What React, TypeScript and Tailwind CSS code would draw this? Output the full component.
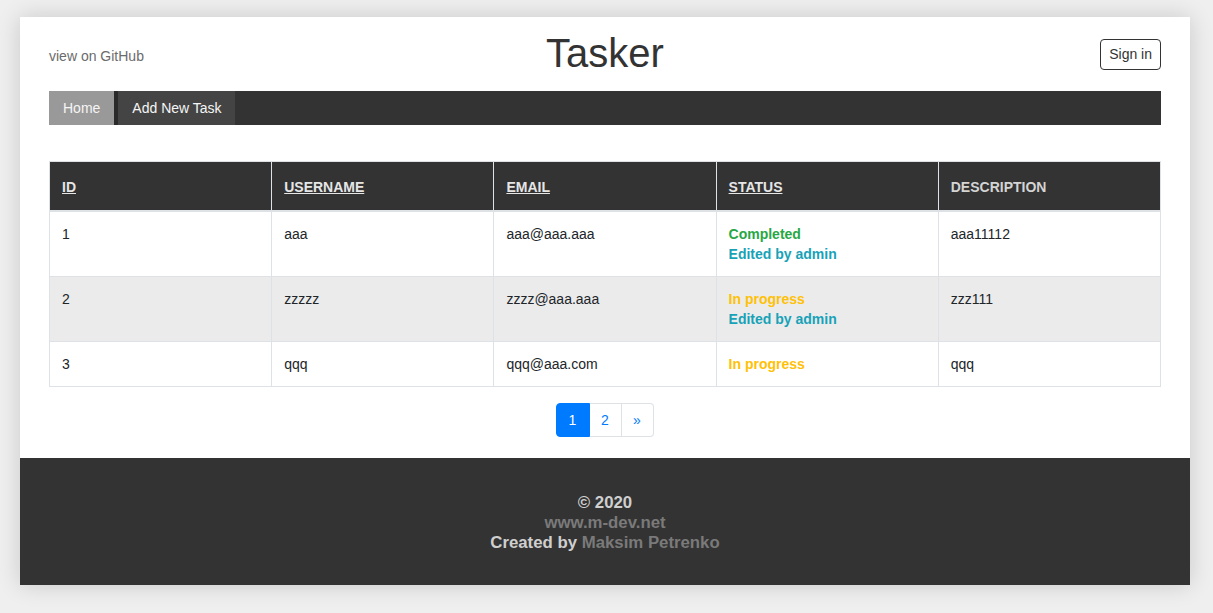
import React from "react";

const rows = [
  { id: "1", user: "aaa", email: "aaa@aaa.aaa", status: "Completed", edited: true, desc: "aaa11112" },
  { id: "2", user: "zzzzz", email: "zzzz@aaa.aaa", status: "In progress", edited: true, desc: "zzz111" },
  { id: "3", user: "qqq", email: "qqq@aaa.com", status: "In progress", edited: false, desc: "qqq" },
];

export default function App() {
  return (
    <div
      className="min-h-[613px] bg-[#efefef] pt-[17px] text-[14px] leading-[20px] text-[#212529]"
      style={{ fontFamily: '"Liberation Sans", Arial, sans-serif' }}
    >
      <div className="mx-[20px] w-[1170px] bg-white shadow-[0_0_22px_rgba(0,0,0,0.16)]">
        <div className="px-[29px]">
          <header className="flex h-[74px] items-center justify-between">
            <a className="mt-[4px] w-[200px] text-[#6b6b6b]">view on GitHub</a>
            <h1 className="-mt-[2px] text-[40px] leading-[48px] text-[#333]">Tasker</h1>
            <div className="flex w-[200px] justify-end">
              <button className="h-[31px] rounded-[4px] border border-[#333] px-[8px] text-[14px] leading-[20px] text-[#333]">
                Sign in
              </button>
            </div>
          </header>

          <nav className="flex h-[34px] bg-[#333]">
            <a className="flex items-center bg-[#999] px-[14px] text-[#f5f5f5]">Home</a>
            <a className="flex items-center border-l-[4px] border-[#2a2a2a] bg-[#444] pl-[14px] pr-[13px] text-[#f5f5f5]">
              Add New Task
            </a>
          </nav>

          <table className="mt-[36px] w-full table-fixed border-collapse border border-[#dee2e6]">
            <thead>
              <tr className="bg-[#333] text-left font-bold text-[#e6e6e6]">
                {["ID", "USERNAME", "EMAIL", "STATUS"].map((h) => (
                  <th key={h} className="border-x border-[#dee2e6] border-b-2 px-[12px] pt-[15px] pb-[13px] font-bold">
                    <a className="underline">{h}</a>
                  </th>
                ))}
                <th className="border-x border-[#dee2e6] border-b-2 px-[12px] pt-[15px] pb-[13px] font-bold text-[#d4d4d4]">
                  DESCRIPTION
                </th>
              </tr>
            </thead>
            <tbody>
              {rows.map((r, i) => (
                <tr key={r.id} className={i === 1 ? "bg-[#ebebeb]" : "bg-white"}>
                  <td className="border border-[#dee2e6] p-[12px] align-top">{r.id}</td>
                  <td className="border border-[#dee2e6] p-[12px] align-top">{r.user}</td>
                  <td className="border border-[#dee2e6] p-[12px] align-top">{r.email}</td>
                  <td className="border border-[#dee2e6] p-[12px] align-top font-bold">
                    <div className={r.status === "Completed" ? "text-[#28a745]" : "text-[#ffc107]"}>{r.status}</div>
                    {r.edited && <div className="text-[#17a2b8]">Edited by admin</div>}
                  </td>
                  <td className="border border-[#dee2e6] p-[12px] align-top">{r.desc}</td>
                </tr>
              ))}
            </tbody>
          </table>

          <div className="flex justify-center pt-[16px] pb-[21px] pr-[1px]">
            <div className="flex h-[34px]">
              <span className="flex w-[34px] items-center justify-center rounded-l-[4px] border border-[#007bff] bg-[#007bff] text-white">
                1
              </span>
              <span className="flex w-[32px] items-center justify-center border border-l-0 border-[#dee2e6] text-[#007bff]">
                2
              </span>
              <span className="flex w-[32px] items-center justify-center rounded-r-[4px] border border-l-0 border-[#dee2e6] text-[#007bff]">
                »
              </span>
            </div>
          </div>
        </div>

        <footer className="flex h-[127px] flex-col items-center justify-center bg-[#333] pt-[2px] text-[16.8px] font-bold leading-[20px] text-[#cfcfcf]">
          <div>© 2020</div>
          <a className="text-[#7a7a7a]">www.m-dev.net</a>
          <div>
            Created by <a className="text-[#7a7a7a]">Maksim Petrenko</a>
          </div>
        </footer>
      </div>
    </div>
  );
}
